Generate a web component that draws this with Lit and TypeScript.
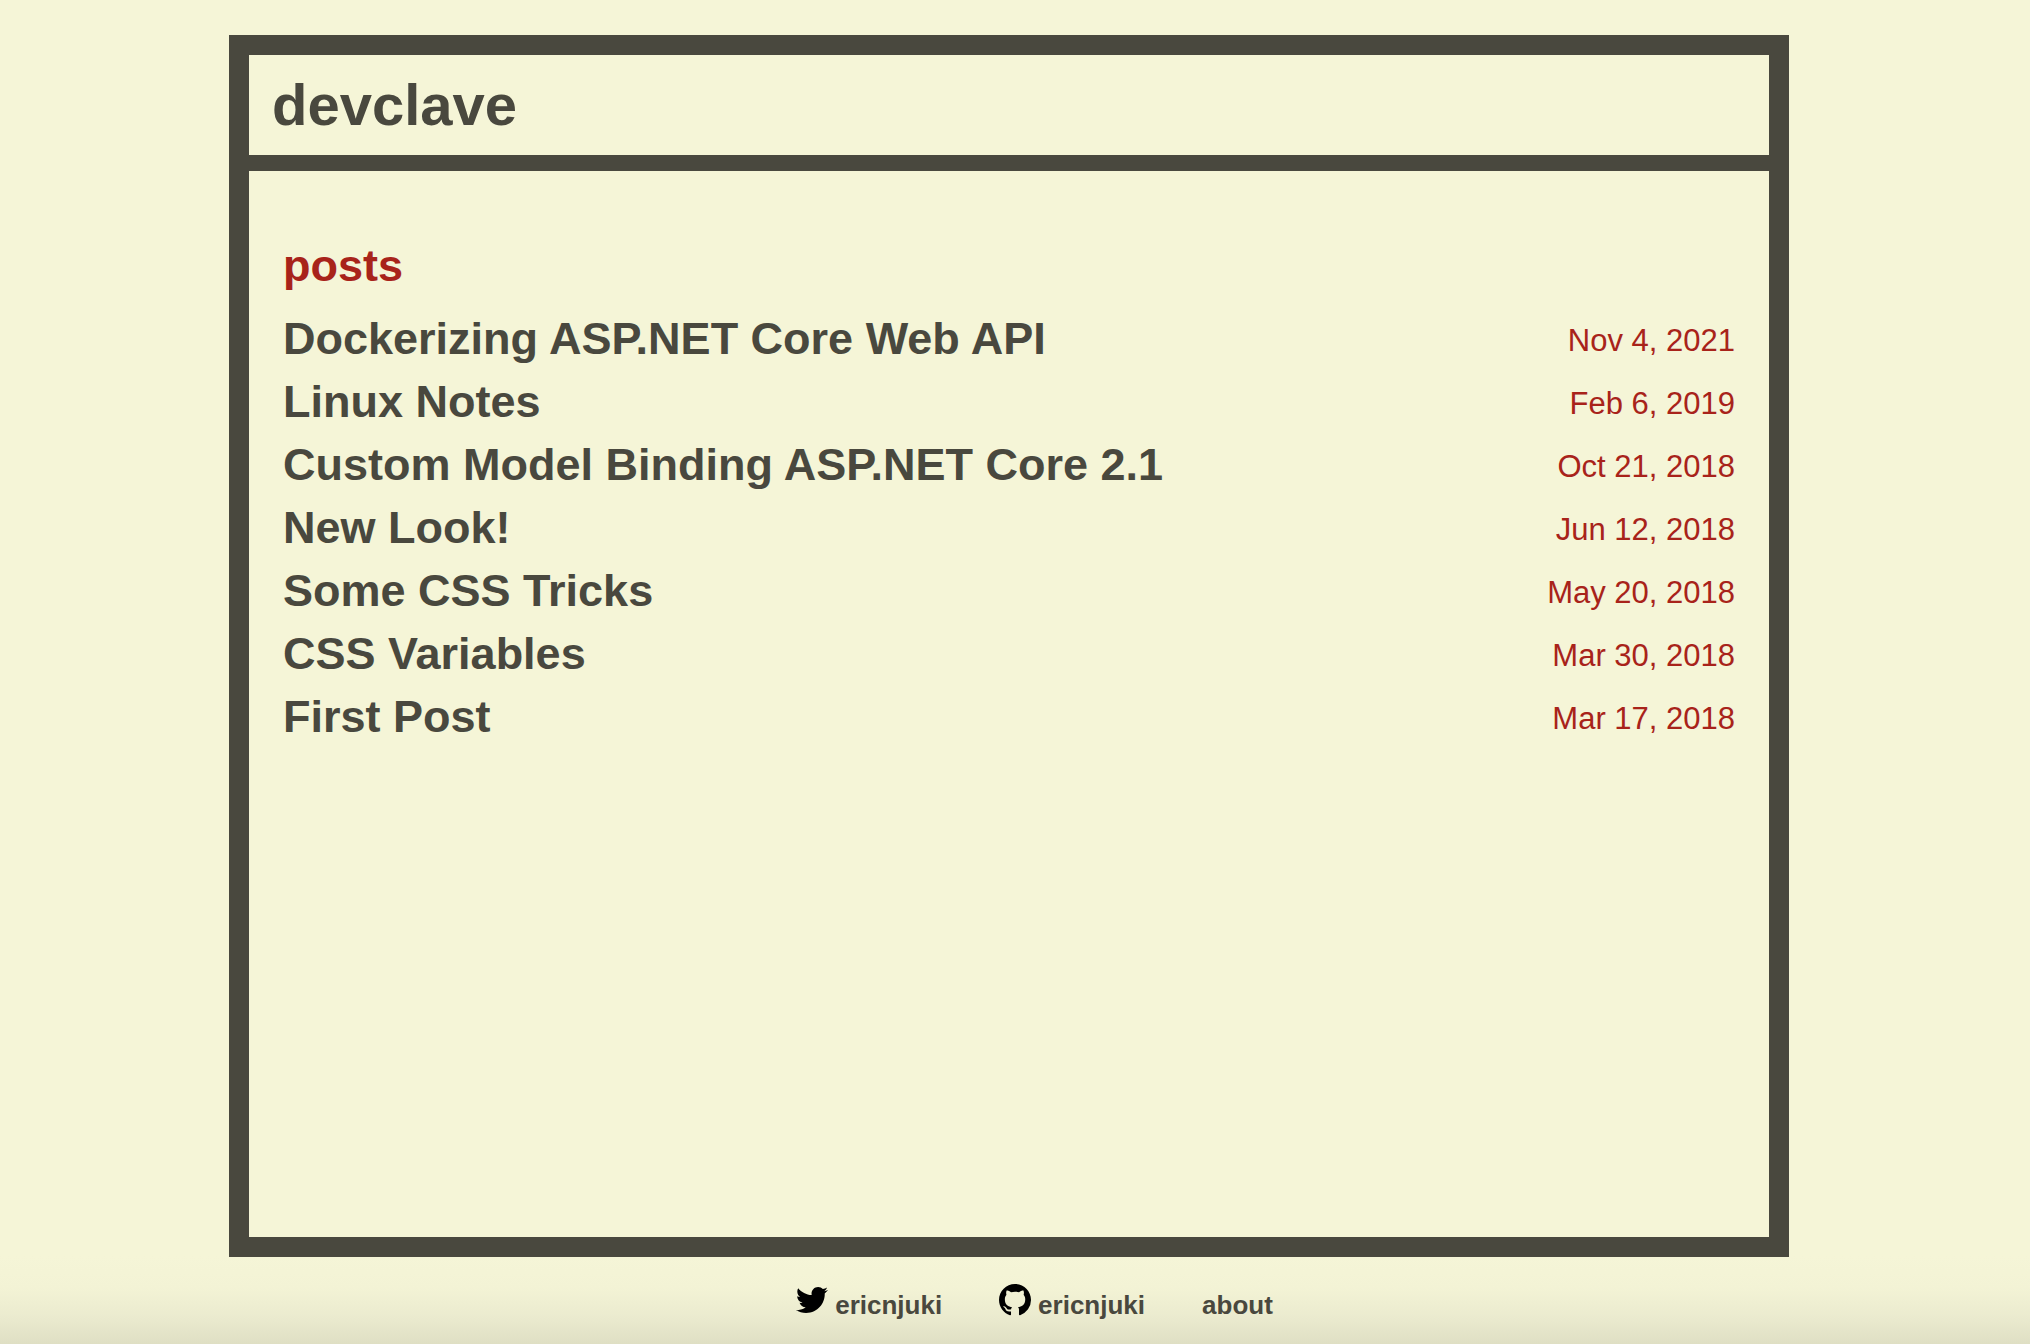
import { LitElement, html, css, svg } from "lit";
import { customElement } from "lit/decorators.js";

interface Post {
  title: string;
  date: string;
}

const posts: Post[] = [
  { title: "Dockerizing ASP.NET Core Web API", date: "Nov 4, 2021" },
  { title: "Linux Notes", date: "Feb 6, 2019" },
  { title: "Custom Model Binding ASP.NET Core 2.1", date: "Oct 21, 2018" },
  { title: "New Look!", date: "Jun 12, 2018" },
  { title: "Some CSS Tricks", date: "May 20, 2018" },
  { title: "CSS Variables", date: "Mar 30, 2018" },
  { title: "First Post", date: "Mar 17, 2018" },
];

const twitterMark = svg`<path d="M23.954 4.569c-.885.389-1.83.654-2.825.775 1.014-.611 1.794-1.574 2.163-2.723-.951.555-2.005.959-3.127 1.184-.896-.959-2.173-1.559-3.591-1.559-2.717 0-4.92 2.203-4.92 4.917 0 .39.045.765.127 1.124C7.691 8.094 4.066 6.13 1.64 3.161c-.427.722-.666 1.561-.666 2.475 0 1.71.87 3.213 2.188 4.096-.807-.026-1.566-.248-2.228-.616v.061c0 2.385 1.693 4.374 3.946 4.827-.413.111-.849.171-1.296.171-.314 0-.615-.03-.916-.086.631 1.953 2.445 3.377 4.604 3.417-1.68 1.319-3.809 2.105-6.102 2.105-.39 0-.779-.023-1.17-.067 2.189 1.394 4.768 2.209 7.557 2.209 9.054 0 13.999-7.496 13.999-13.986 0-.209 0-.42-.015-.63.961-.689 1.8-1.56 2.46-2.548l-.047-.02z"/>`;

const githubMark = svg`<path fill-rule="evenodd" d="M8 0C3.58 0 0 3.58 0 8c0 3.54 2.29 6.53 5.47 7.59.4.07.55-.17.55-.38 0-.19-.01-.82-.01-1.49-2.01.37-2.53-.49-2.69-.94-.09-.23-.48-.94-.82-1.13-.28-.15-.68-.52-.01-.53.63-.01 1.08.58 1.23.82.72 1.21 1.87.87 2.33.66.07-.52.28-.87.51-1.07-1.78-.2-3.64-.89-3.64-3.95 0-.87.31-1.59.82-2.15-.08-.2-.36-1.02.08-2.12 0 0 .67-.21 2.2.82.64-.18 1.32-.27 2-.27s1.36.09 2 .27c1.53-1.04 2.2-.82 2.2-.82.44 1.1.16 1.92.08 2.12.51.56.82 1.27.82 2.15 0 3.07-1.87 3.75-3.65 3.95.29.25.54.73.54 1.48 0 1.07-.01 1.93-.01 2.2 0 .21.15.46.55.38A8.01 8.01 0 0 0 16 8c0-4.42-3.58-8-8-8z"/>`;

@customElement("app-root")
export class AppRoot extends LitElement {
  static styles = css`
    :host {
      --ink: #49483e;
      --paper: #f5f5d7;
      --accent: #a8231a;
      display: flex;
      flex-direction: column;
      box-sizing: border-box;
      min-height: 100vh;
      padding: 35px 12px 0 0;
      background: linear-gradient(to top, #dfdfc4, #ebebcf 28px, #f3f3d5 56px, var(--paper) 88px);
      color: var(--ink);
      font-family: "Liberation Sans", Arial, sans-serif;
    }
    a {
      color: inherit;
      text-decoration: none;
    }
    h1,
    h2,
    h3,
    ul {
      margin: 0;
      padding: 0;
    }
    ul {
      list-style: none;
    }
    .frame {
      flex: 1;
      display: flex;
      flex-direction: column;
      box-sizing: border-box;
      width: calc(100% - 48px);
      max-width: 1560px;
      margin: 0 auto;
      border: 20px solid var(--ink);
      background: var(--paper);
    }
    .masthead {
      padding: 18px 23px;
      border-bottom: 16px solid var(--ink);
    }
    .site {
      font-size: 58px;
      line-height: 64px;
    }
    .content {
      padding: 63px 34px;
    }
    .heading {
      margin-bottom: 10px;
      color: var(--accent);
      font-size: 45px;
      line-height: 63px;
    }
    .post {
      display: flex;
      align-items: center;
      justify-content: space-between;
      gap: 24px;
    }
    .title {
      font-size: 45px;
      line-height: 63px;
    }
    .date {
      flex: none;
      padding-top: 5px;
      color: var(--accent);
      font-size: 31px;
      line-height: 36px;
    }
    .links {
      display: flex;
      justify-content: center;
      gap: 57px;
      padding: 27px 0 24px 51px;
      font-size: 26px;
      font-weight: bold;
      line-height: 30px;
    }
    .link {
      display: flex;
      gap: 7px;
    }
    .label {
      padding-top: 6px;
    }
    .icon {
      width: 32px;
      height: 32px;
      fill: #000;
    }
  `;

  render() {
    return html`
      <main class="frame">
        <header class="masthead">
          <h1 class="site"><a href="#home">devclave</a></h1>
        </header>
        <section class="content">
          <h2 class="heading">posts</h2>
          <ul>
            ${posts.map(
              (post) => html`
                <li class="post">
                  <h3 class="title"><a href="#post">${post.title}</a></h3>
                  <time class="date">${post.date}</time>
                </li>
              `
            )}
          </ul>
        </section>
      </main>
      <footer class="links">
        <a class="link" href="#twitter">
          <svg class="icon" viewBox="0 0 24 24" aria-hidden="true">${twitterMark}</svg>
          <span class="label">ericnjuki</span>
        </a>
        <a class="link" href="#github">
          <svg class="icon" viewBox="0 0 16 16" aria-hidden="true">${githubMark}</svg>
          <span class="label">ericnjuki</span>
        </a>
        <a class="link" href="#about"><span class="label">about</span></a>
      </footer>
    `;
  }
}
